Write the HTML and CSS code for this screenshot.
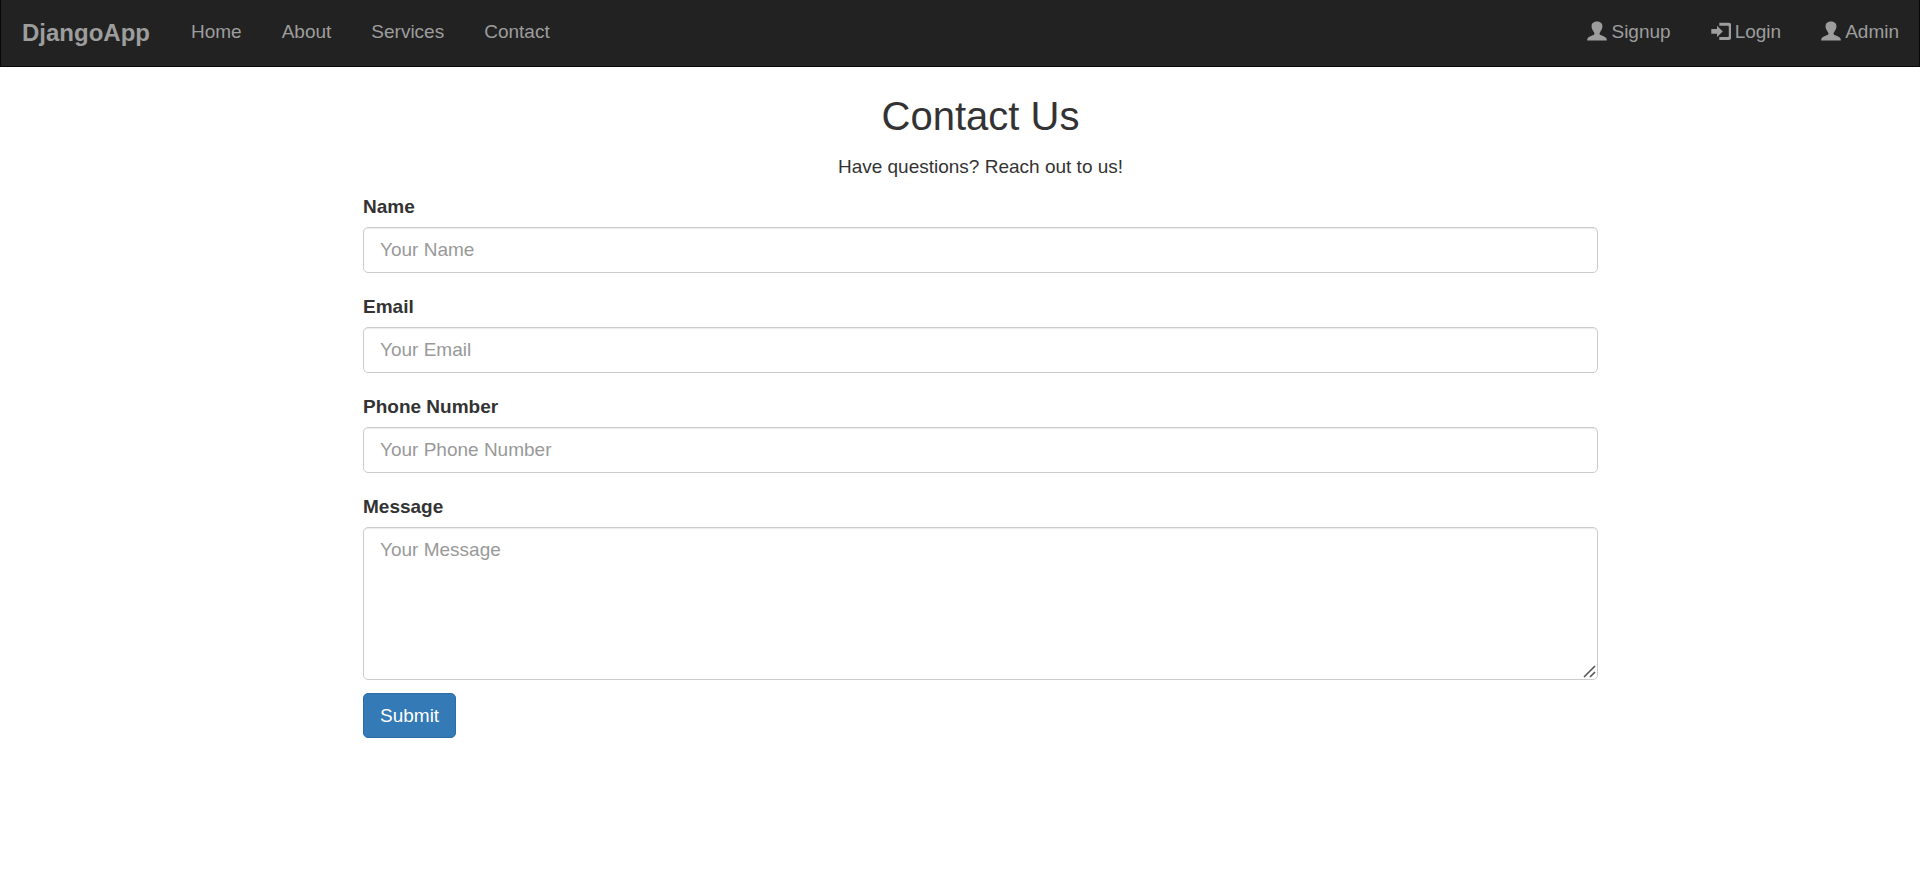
FILE: index.html
```html
<!DOCTYPE html>
<html lang="en">
<head>
<meta charset="utf-8">
<meta name="viewport" content="width=device-width, initial-scale=1">
<title>Contact Us</title>
<link rel="stylesheet" href="styles.css">
</head>
<body>
<svg class="icon-defs" aria-hidden="true">
  <symbol id="icon-user" viewBox="0 0 20 20">
    <path d="M10 0.5C13 0.5 15.4 2 15.4 5C15.4 6 15.5 6.6 15.1 7.5C14.8 8.3 14.5 8.6 14.1 9.6C13.7 10.6 13.1 11.3 12.6 12V13.2C12.8 14 17.8 15.4 19 16.8C19.7 17.6 19.8 18.6 19.8 19.5H0.2C0.2 18.6 0.3 17.6 1 16.8C2.2 15.4 7.2 14 7.4 13.2V12C6.9 11.3 6.3 10.6 5.9 9.6C5.5 8.6 5.2 8.3 4.9 7.5C4.5 6.6 4.6 6 4.6 5C4.6 2 7 0.5 10 0.5Z"/>
  </symbol>
  <symbol id="icon-login" viewBox="0 0 20 20">
    <path d="M8.3 1.8H17.2C19.6 1.8 21 3.2 21 5.4V15.6C21 17.6 19.6 19 17.2 19H8.3V16H16.6C17.4 16 17.8 15.6 17.8 14.8V6C17.8 5.2 17.4 4.8 16.6 4.8H8.3Z"/>
    <path d="M6 4.8L11.8 10.4L6 16V12.8H0.3V8H6Z"/>
  </symbol>
</svg>

<nav class="navbar">
  <a class="brand" href="#">DjangoApp</a>
  <ul class="nav">
    <li><a href="#">Home</a></li>
    <li><a href="#">About</a></li>
    <li><a href="#">Services</a></li>
    <li><a href="#">Contact</a></li>
  </ul>
  <ul class="nav nav-right">
    <li><a href="#"><svg class="icon" aria-hidden="true"><use href="#icon-user"/></svg>Signup</a></li>
    <li><a href="#"><svg class="icon" aria-hidden="true"><use href="#icon-login"/></svg>Login</a></li>
    <li><a href="#"><svg class="icon" aria-hidden="true"><use href="#icon-user"/></svg>Admin</a></li>
  </ul>
</nav>

<main class="page">
  <div class="content">
    <h2 class="title">Contact Us</h2>
    <p class="lead">Have questions? Reach out to us!</p>
    <form class="form">
      <div class="field">
        <label for="name">Name</label>
        <input class="control" type="text" id="name" name="name" placeholder="Your Name">
      </div>
      <div class="field">
        <label for="email">Email</label>
        <input class="control" type="email" id="email" name="email" placeholder="Your Email">
      </div>
      <div class="field">
        <label for="phone">Phone Number</label>
        <input class="control" type="tel" id="phone" name="phone" placeholder="Your Phone Number">
      </div>
      <div class="field field-message">
        <label for="message">Message</label>
        <textarea class="control" id="message" name="message" rows="5" placeholder="Your Message"></textarea>
      </div>
      <button class="submit" type="submit">Submit</button>
    </form>
  </div>
</main>
</body>
</html>
```
FILE: styles.css
```css
* {
  box-sizing: border-box;
}

body {
  margin: 0;
  background: #fff;
  color: #333;
  font-family: "Liberation Sans", Arial, Helvetica, sans-serif;
  font-size: 19px;
  line-height: 27px;
}

.icon-defs {
  display: none;
}

.navbar {
  display: flex;
  background: #222;
  border: 1px solid #080808;
  border-top: 0;
}

.navbar a {
  display: flex;
  padding: 18px 20px 21px;
  color: #9d9d9d;
  text-decoration: none;
}

.navbar a:hover {
  color: #fff;
}

.navbar .brand {
  padding: 19px 21px 20px;
  font-size: 24px;
  font-weight: bold;
}

.nav {
  display: flex;
  margin: 0;
  padding: 0;
  list-style: none;
}

.nav-right {
  margin-left: auto;
}

.icon {
  width: 20px;
  height: 20px;
  margin: 3px 4px 0 0;
  fill: currentColor;
  overflow: visible;
}

.page {
  display: grid;
  grid-template-columns: 363fr 1235fr 322fr;
}

.content {
  grid-column: 2;
  min-width: 0;
  padding-top: 27px;
}

.title {
  margin: 0 0 15px;
  font-size: 40px;
  font-weight: normal;
  line-height: 44px;
  text-align: center;
}

.lead {
  margin: 0 0 13px;
  text-align: center;
}

.field {
  display: flex;
  flex-direction: column;
  gap: 7px;
  margin-bottom: 20px;
}

.field label {
  align-self: flex-start;
  font-weight: bold;
}

.field-message {
  margin-bottom: 13px;
}

.control {
  width: 100%;
  height: 46px;
  padding: 8px 16px;
  border: 1px solid #ccc;
  border-radius: 5px;
  background: #fff;
  box-shadow: inset 0 1px 1px rgba(0, 0, 0, 0.075);
  color: #555;
  font: inherit;
}

textarea.control {
  height: 153px;
  resize: both;
}

textarea.control::-webkit-resizer {
  background: url("data:image/svg+xml,%3Csvg xmlns='http://www.w3.org/2000/svg' width='15' height='15'%3E%3Cpath d='M2 13L13 2M8 13L13 8' stroke='%23555' stroke-width='1.6' fill='none'/%3E%3C/svg%3E") no-repeat right bottom;
}

.control::placeholder {
  color: #999;
  opacity: 1;
}

.submit {
  padding: 8px 16px;
  border: 1px solid #2e6da4;
  border-radius: 5px;
  background: #337ab7;
  color: #fff;
  font: inherit;
  cursor: pointer;
}
```
